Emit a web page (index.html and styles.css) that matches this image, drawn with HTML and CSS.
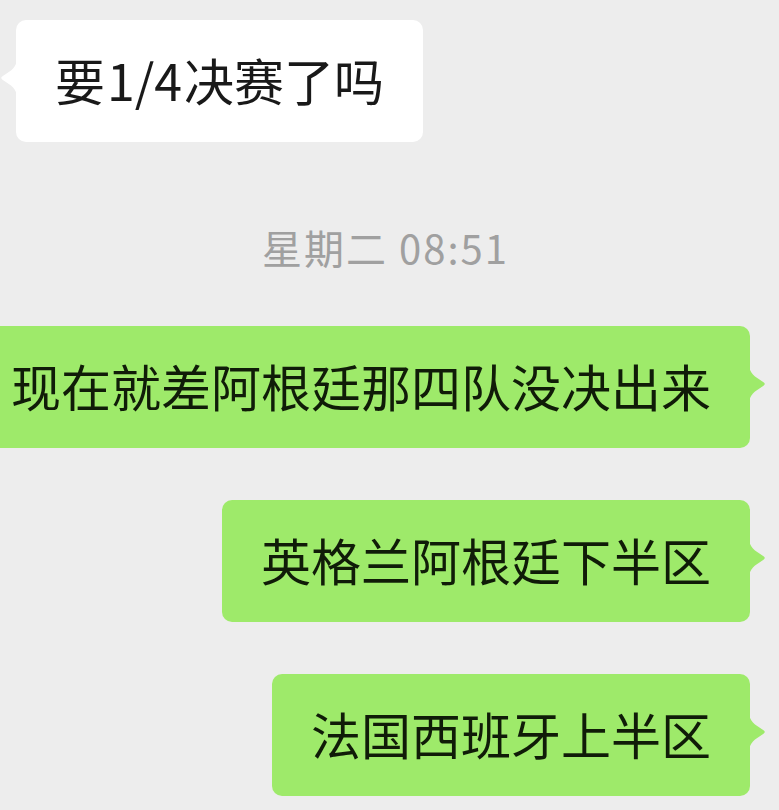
FILE: index.html
```html
<!DOCTYPE html>
<html lang="zh-CN">
<head>
    <meta charset="UTF-8">
    <meta name="viewport" content="width=device-width, initial-scale=1.0">
    <title>聊天</title>
    <link rel="stylesheet" href="styles.css">
</head>
<body>
    <div class="chat">
        <!-- 对方消息 -->
        <div class="row left">
            <div class="bubble white">
                <svg class="tail" viewBox="0 0 18 34"><path d="M0 0 C1 4 3 7 6 9.5 L14.5 15.3 Q17 17 14.5 18.7 L6 24.5 C3 27 1 30 0 34 Z"/></svg>
                要<span class="latin">1/4</span>决赛了吗
            </div>
        </div>

        <div class="time">星期二 08:51</div>

        <!-- 自己的消息 -->
        <div class="row right">
            <div class="bubble green">
                现在就差阿根廷那四队没决出来
                <svg class="tail" viewBox="0 0 18 34"><path d="M0 0 C1 4 3 7 6 9.5 L14.5 15.3 Q17 17 14.5 18.7 L6 24.5 C3 27 1 30 0 34 Z"/></svg>
            </div>
        </div>

        <div class="row right">
            <div class="bubble green">
                英格兰阿根廷下半区
                <svg class="tail" viewBox="0 0 18 34"><path d="M0 0 C1 4 3 7 6 9.5 L14.5 15.3 Q17 17 14.5 18.7 L6 24.5 C3 27 1 30 0 34 Z"/></svg>
            </div>
        </div>

        <div class="row right">
            <div class="bubble green">
                法国西班牙上半区
                <svg class="tail" viewBox="0 0 18 34"><path d="M0 0 C1 4 3 7 6 9.5 L14.5 15.3 Q17 17 14.5 18.7 L6 24.5 C3 27 1 30 0 34 Z"/></svg>
            </div>
        </div>
    </div>
</body>
</html>
```

FILE: styles.css
```css
body {
    margin: 0;
    background-color: #ededed;
    font-family: "Noto Sans CJK SC", "Noto Sans", sans-serif;
    overflow: hidden;
}

.chat {
    display: flex;
    flex-direction: column;
    padding-top: 20px;
}

.row {
    display: flex;
}

.row.left {
    justify-content: flex-start;
    padding-left: 16px;
}

.row.right {
    justify-content: flex-end;
    padding-right: 29px;
    margin-bottom: 52px;
}

.bubble {
    position: relative;
    flex-shrink: 0;
    display: flex;
    align-items: center;
    height: 122px;
    padding: 0 39px 4px;
    box-sizing: border-box;
    border-radius: 10px;
    font-size: 50px;
    line-height: 1;
    white-space: nowrap;
}

.bubble .latin {
    margin: 0 2px;
}

.bubble.white {
    background-color: #fff;
    color: #191919;
}

.bubble.green {
    background-color: #9eea6a;
    color: #101c08;
}

.tail {
    position: absolute;
    top: 41px;
    width: 18px;
    height: 34px;
}

.white .tail {
    left: -17px;
    fill: #fff;
    transform: scaleX(-1);
}

.green .tail {
    right: -17px;
    fill: #9eea6a;
}

.time {
    text-align: center;
    color: #a0a0a0;
    font-size: 40px;
    letter-spacing: 2px;
    line-height: 46px;
    margin: 82px 0 56px;
    padding-right: 8px;
}
```
